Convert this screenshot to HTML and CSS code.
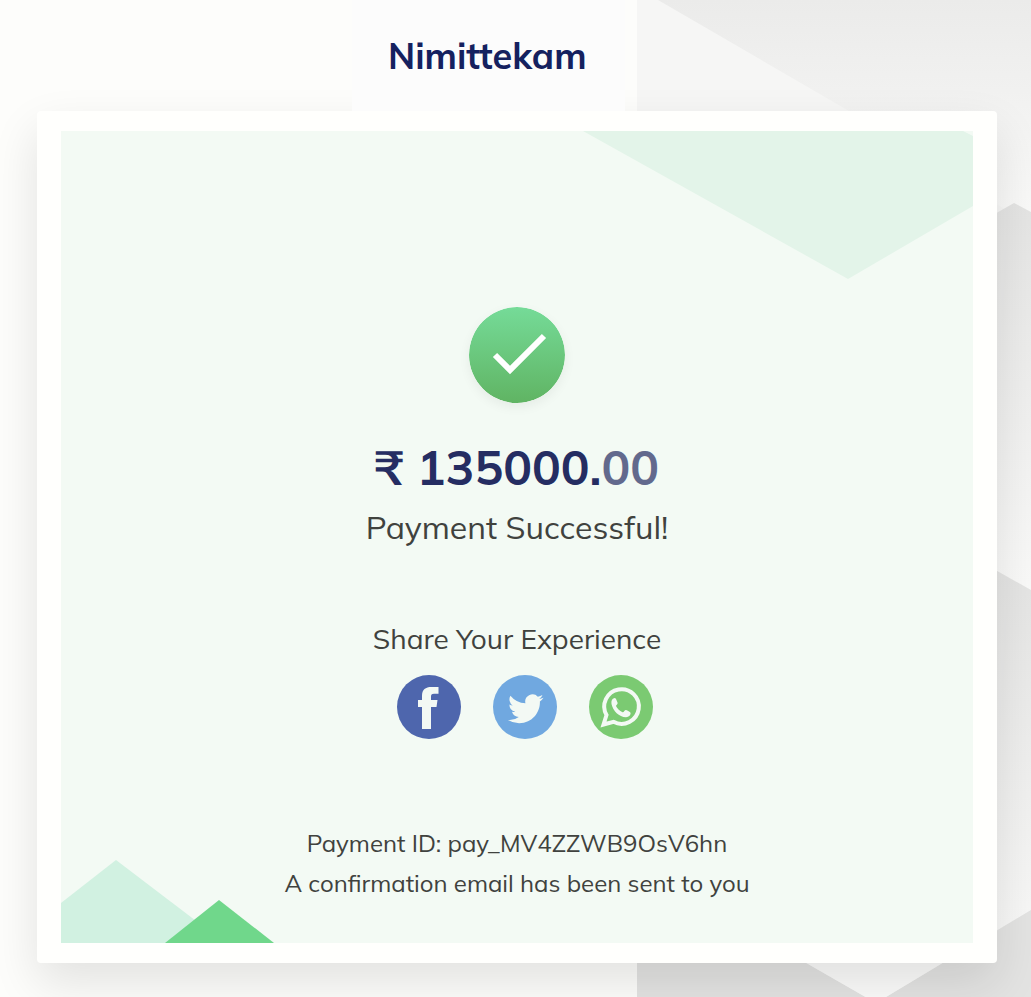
FILE: index.html
```html
<!DOCTYPE html>
<html lang="en">
  <head>
    <meta charset="utf-8">
    <meta name="viewport" content="width=device-width, initial-scale=1.0">
    <title>Nimittekam</title>
    <link rel="stylesheet" href="styles.css">
  </head>
  <body>
    <svg class="backdrop" viewBox="0 0 394 997" preserveAspectRatio="none" aria-hidden="true">
      <defs>
        <linearGradient id="shade-top" x1="0" y1="0" x2="0" y2="1">
          <stop offset="0" stop-color="#ebebea"/>
          <stop offset="1" stop-color="#fafaf9"/>
        </linearGradient>
        <linearGradient id="shade-middle" x1="0" y1="0" x2="0" y2="1">
          <stop offset="0" stop-color="#e4e4e3"/>
          <stop offset="1" stop-color="#fafaf9"/>
        </linearGradient>
        <linearGradient id="shade-low" x1="0" y1="0" x2="0" y2="1">
          <stop offset="0" stop-color="#e2e2e1"/>
          <stop offset="1" stop-color="#f9f9f8"/>
        </linearGradient>
      </defs>
      <rect width="394" height="997" fill="#f6f6f5"/>
      <path d="M21 0H394V224L377 215L212 111Z" fill="url(#shade-top)"/>
      <path d="M300 247L377 203L394 212V600H300Z" fill="url(#shade-middle)"/>
      <path d="M300 537L394 590V960H300Z" fill="url(#shade-low)"/>
      <path d="M0 930H112L239 1003L394 910V997H0Z" fill="#e3e3e2"/>
      <path d="M112 930L239 1003L360 930Z" fill="#fbfbfa"/>
    </svg>

    <div class="page">
      <header class="header">
        <h1>Nimittekam</h1>
      </header>
      <main class="card">
        <section class="receipt">
          <svg class="corner corner-top" viewBox="0 0 390 148" aria-hidden="true">
            <path d="M0 0H380L390 5V75L265 148Z" fill="#e3f4e9"/>
          </svg>
          <svg class="corner corner-bottom" viewBox="0 0 214 84" aria-hidden="true">
            <path d="M0 44L55 1L164 84H0Z" fill="#d1f1e1"/>
            <path d="M104 84L158 41L213 84Z" fill="#70d78b"/>
          </svg>

          <svg class="tick" viewBox="0 0 96 96" role="img" aria-label="Success">
            <defs>
              <linearGradient id="tick-fill" x1="0" y1="0" x2="0" y2="1">
                <stop offset="0" stop-color="#75db98"/>
                <stop offset="1" stop-color="#60b463"/>
              </linearGradient>
            </defs>
            <circle cx="48" cy="48" r="48" fill="url(#tick-fill)"/>
            <path d="M26 48L41 63L75 29" fill="none" stroke="#fff" stroke-width="6"/>
          </svg>
          <p class="amount">₹ 135000.<span class="decimals">00</span></p>
          <p class="status">Payment Successful!</p>

          <h2>Share Your Experience</h2>
          <nav class="share">
            <a href="#facebook" aria-label="Facebook">
              <svg viewBox="0 0 64 64">
                <circle cx="32" cy="32" r="32" fill="#4e66ad"/>
                <path d="M25 54V32H21V25H25V21C25 14.500 28.500 12 34.500 12C37.500 12 40 12 41.500 12V18.800H37C34.500 19 34 20 34 21.500V25H40.500L39.500 32H34V54Z" fill="#f3f9f4"/>
              </svg>
            </a>
            <a href="#twitter" aria-label="Twitter">
              <svg viewBox="0 0 64 64">
                <circle cx="32" cy="32" r="32" fill="#70a8e0"/>
                <path transform="translate(15 16) scale(1.480)" d="M23.950 4.570a10 10 0 0 1-2.820.770 4.960 4.960 0 0 0 2.160-2.720 9.900 9.900 0 0 1-3.120 1.190 4.920 4.920 0 0 0-8.390 4.480A13.930 13.930 0 0 1 1.640 3.160a4.920 4.920 0 0 0 1.520 6.570 4.900 4.900 0 0 1-2.230-.610v.060a4.920 4.920 0 0 0 3.950 4.830 5 5 0 0 1-2.210.080 4.940 4.940 0 0 0 4.600 3.420A9.870 9.870 0 0 1 0 19.540a13.990 13.990 0 0 0 7.560 2.210c9.050 0 14-7.500 14-13.980 0-.210 0-.420-.020-.630a9.940 9.940 0 0 0 2.460-2.550z" fill="#f3f9f4"/>
              </svg>
            </a>
            <a href="#whatsapp" aria-label="WhatsApp">
              <svg viewBox="0 0 64 64">
                <circle cx="32" cy="32" r="32" fill="#7bca72"/>
                <path d="M14.500 49.500L17.500 40A17.300 17.300 0 1 1 24.500 46.800Z" fill="none" stroke="#f3f9f4" stroke-width="4"/>
                <path d="M25.500 23C23 23.500 22 26 22.500 29C24 36 30 42 37 42.300C40 42 42 40 41.500 37.800C41 37 38.500 35.700 37 35C35.500 35 35 37.500 33.500 37.200C30.500 36 28 33.500 27 31C27 30.300 29.300 29 28.500 27.500L27 24Q26.500 23 25.500 23Z" fill="#f3f9f4"/>
              </svg>
            </a>
          </nav>

          <div class="details">
            <p>Payment ID: pay_MV4ZZWB9OsV6hn</p>
            <p>A confirmation email has been sent to you</p>
          </div>
        </section>
      </main>
    </div>
  </body>
</html>
```

FILE: styles.css
```css
* {
  box-sizing: border-box;
}
body {
  position: relative;
  margin: 0;
  min-height: 100vh;
  background-color: #fdfdfb;
  color: #40423e;
  font-family: Muli, Mulish, "Noto Sans", sans-serif;
}
h1, h2, p {
  margin: 0;
  font-weight: 400;
}
.backdrop {
  position: absolute;
  top: 0;
  right: 0;
  width: 394px;
  height: 100%;
}
.page {
  position: relative;
  max-width: 1031px;
  min-height: 100vh;
  margin: 0 auto;
  padding: 0 34px 34px 37px;
}
.header {
  position: relative;
  z-index: 1;
  width: 273px;
  height: 111px;
  margin-left: 315px;
  padding: 32px 36px;
  background-color: #fcfcfc;
}
.header h1 {
  color: #15215f;
  font-size: 36px;
  font-weight: 700;
  font-variant-ligatures: none;
  line-height: 48px;
}
.card {
  padding: 20px 24px;
  border-radius: 4px;
  background-color: #fffffd;
  box-shadow: 0 20px 48px rgba(0, 0, 0, .11);
}
.receipt {
  display: flex;
  flex-direction: column;
  align-items: center;
  position: relative;
  padding: 176px 24px 40px;
  background-color: #f3faf4;
  text-align: center;
}
.corner {
  position: absolute;
}
.corner-top {
  top: 0;
  right: 0;
  width: 390px;
}
.corner-bottom {
  bottom: 0;
  left: 0;
  width: 214px;
}
.tick {
  width: 96px;
  height: 96px;
  margin-bottom: 32px;
  border-radius: 50%;
  box-shadow: 0 4px 12px rgba(0, 0, 0, .06);
}
.amount {
  color: #252d62;
  font-size: 48px;
  font-weight: 700;
  line-height: 64px;
}
.decimals {
  opacity: .7;
}
.status {
  margin-bottom: 68px;
  font-size: 32px;
  line-height: 56px;
}
.receipt h2 {
  margin-bottom: 20px;
  font-size: 28px;
  line-height: 32px;
}
.share {
  display: flex;
  gap: 32px;
  margin-bottom: 84px;
  padding-left: 16px;
}
.share svg {
  display: block;
  width: 64px;
  height: 64px;
}
.details {
  position: relative;
  font-size: 24px;
  line-height: 40px;
}
```
